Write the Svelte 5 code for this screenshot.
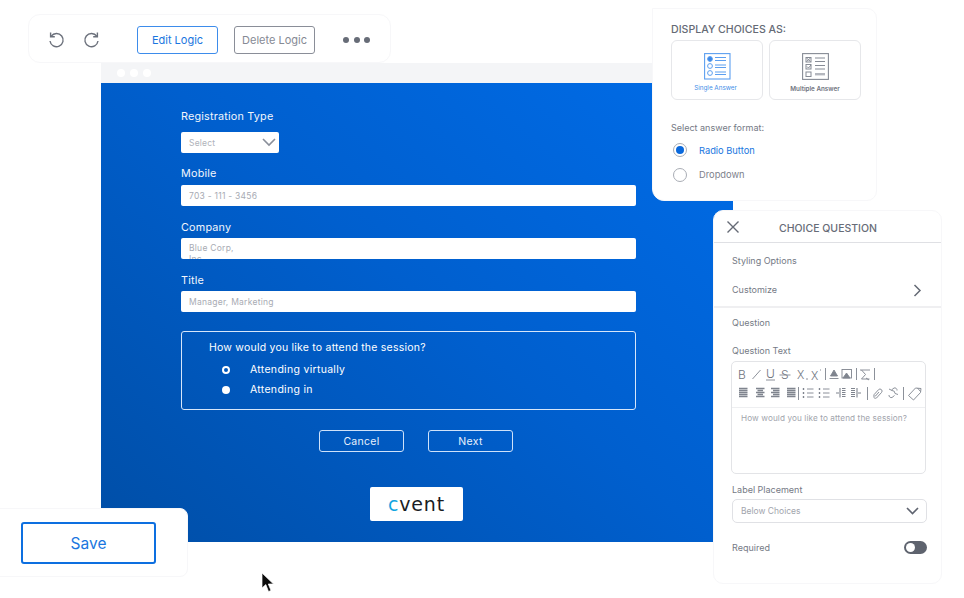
<script>
  const fields = [
    { label: 'Mobile', lines: ['703 - 111 - 3456'] },
    { label: 'Company', lines: ['Blue Corp,', 'Inc.'] },
    { label: 'Title', lines: ['Manager, Marketing'] }
  ];
</script>

<div class="canvas">
  <section class="window">
    <div class="chrome"><i></i><i></i><i></i></div>
    <div class="stage">
      <form class="form">
        <div class="lbl first">Registration Type</div>
        <div class="select">
          <span>Select</span>
          <svg width="14" height="9" viewBox="0 0 14 9"><path d="M1 1l6 6 6-6" fill="none" stroke="#8a8f9a" stroke-width="1.6"/></svg>
        </div>
        {#each fields as f}
          <div class="lbl">{f.label}</div>
          <div class="input" class:multi={f.lines.length > 1}>
            {#each f.lines as line}<span>{line}</span>{/each}
          </div>
        {/each}
        <div class="qbox">
          <div class="qtitle">How would you like to attend the session?</div>
          <div class="opt"><b class="dot on"></b>Attending virtually</div>
          <div class="opt"><b class="dot"></b>Attending in</div>
        </div>
        <div class="actions">
          <div class="ghost">Cancel</div>
          <div class="ghost">Next</div>
        </div>
      </form>
      <div class="logo"><span class="c">c</span>vent</div>
    </div>
  </section>

  <section class="panel toolbar">
    <svg class="hist" width="18" height="18" viewBox="0 0 18 18" fill="none" stroke="#6b707b" stroke-width="1.4"><path d="M4.2 5.2A6.6 6.6 0 1 1 3 10"/><path d="M3.6 1.6v4.2h4.2"/></svg>
    <svg class="hist two" width="18" height="18" viewBox="0 0 18 18" fill="none" stroke="#6b707b" stroke-width="1.4"><path d="M13.8 5.2A6.6 6.6 0 1 0 15 10"/><path d="M14.4 1.6v4.2h-4.2"/></svg>
    <div class="btn blue">Edit Logic</div>
    <div class="btn gray">Delete Logic</div>
    <div class="dots"><i></i><i></i><i></i></div>
  </section>

  <section class="panel display">
    <h2>DISPLAY CHOICES AS:</h2>
    <div class="cards">
      <div class="card">
        <svg width="27" height="27" viewBox="0 0 27 27" fill="none" stroke="#5c9ff0">
          <rect x=".6" y=".6" width="25.4" height="25.4" stroke-width="1.1"/>
          <circle cx="6" cy="6" r="2.4" fill="#3b87e6"/><circle cx="6" cy="13" r="2.4"/><circle cx="6" cy="20" r="2.4"/>
          <path d="M11 4.5h11M11 7.5h11M11 12h11M11 14.500h11M11 19h11M11 21.500h11" stroke-width="1.100"/>
        </svg>
        <span class="cap bluecap">Single Answer</span>
      </div>
      <div class="card">
        <svg class="ms" width="27" height="27" viewBox="0 0 27 27" fill="none" stroke="#868b95">
          <rect x=".6" y=".6" width="25.800" height="25.800" stroke-width="1.100"/>
          <rect x="4" y="4.500" width="5" height="4.500"/><rect x="4" y="11.500" width="5" height="4.500"/><rect x="4" y="19" width="5" height="4.500"/>
          <path d="M4.500 5l4 3.500M8.500 5l-4 3.500M5 13.500l1.500 1.500 2.500-3"/>
          <path d="M13 5h10M13 8.500h10M13 12.500h10M13 16h10" stroke-width="1.100"/><path d="M13 21.200h10" stroke-width="2.400" stroke="#b4b7be"/>
        </svg>
        <span class="cap graycap">Multiple Answer</span>
      </div>
    </div>
    <div class="fmt">Select answer format:</div>
    <div class="radio sel"><b><em></em></b><span>Radio Button</span></div>
    <div class="radio"><b></b><span>Dropdown</span></div>
  </section>

  <section class="panel choice">
    <header>
      <svg width="14" height="14" viewBox="0 0 14 14"><path d="M1.500 1.500l11 11M12.500 1.500l-11 11" stroke="#656a75" stroke-width="1.400"/></svg>
      <h3>CHOICE QUESTION</h3>
    </header>
    <div class="grp">
      <div class="t s1">Styling Options</div>
      <div class="t s2">
        <span>Customize</span>
        <svg width="9" height="13" viewBox="0 0 9 13"><path d="M1.500 1l5.500 5.500L1.500 12" fill="none" stroke="#656a75" stroke-width="1.500"/></svg>
      </div>
    </div>
    <div class="grp g2">
      <div class="t q1">Question</div>
      <div class="t q2">Question Text</div>
      <div class="editor">
        <svg class="tools" width="193" height="45" viewBox="732 362 193 45" fill="none" stroke="#7f848e" stroke-width=".9">
          <g font-family="Inter, sans-serif" font-size="12" font-weight="300" fill="#6f747e" stroke="none">
            <text x="738" y="379">B</text>
            <text x="766" y="378">U</text>
            <text x="781" y="379">S</text>
            <text x="797" y="379" font-size="11">X</text>
            <text x="811" y="380" font-size="11">X</text>
          </g>
          <path d="M752.500 379l8-9"/>
          <path d="M766 380h9M779.500 375h11M806 379h2M820 370h1"/>
          <path d="M825.500 368v12M856.500 368v12M874.500 368v12M798.500 387v13M867.500 387v13M903.500 387v13"/>
          <path d="M834 370l3.500 6h-7z" fill="#7f848e"/><path d="M829.500 378.500h9"/>
          <rect x="842" y="369.500" width="9.500" height="8.500"/><path d="M843 378l3.500-5 3.500 5z" fill="#7f848e"/>
          <path d="M860 370h10M861.500 370l4 4.500-4 4.500h8M866 378l3 2"/>
          <path d="M739 388.500h8.500M739 390.500h8.500M739 392.500h8.500M739 394.500h8.500M739 396.500h8.500M756 388.500h8.500M757.500 390.500h5.500M756 392.500h8.500M757.500 394.500h5.500M756 396.500h8.500M771 388.500h8.500M773 390.500h6.500M771 392.500h8.500M773 394.500h6.500M771 396.500h8.500M787 388.500h8.500M787 390.500h8.500M787 392.500h8.500M787 394.500h8.500M787 396.500h8.500" stroke-width="1.300"/>
          <path d="M807 389h6.500M807 393h6.500M807 397h6.500M823 389h6.500M823 393h6.500M823 397h6.500"/>
          <path d="M803.500 388v2M803.500 392v2M803.500 396v2M819.500 388v2M819.500 392v2M819.500 396v2" stroke-width="1.400"/>
          <path d="M840 388v9.500M842 388.500h3.500M842 390.500h3.500M842 392.500h3.500M842 394.500h3.500M842 396.500h3.500M836 393h3M857 388v9.500M851 388.500h4M851 390.500h4M851 392.500h4M851 394.500h4M851 396.500h4M858 393h3" stroke-width="1.100"/>
          <path d="M873.500 396.500a2 2 0 0 0 3 1.500l5-5.500a2 2 0 0 0-3-2.800l-4.500 5a1 1 0 0 0 1.500 1.300l3.500-4"/>
          <path d="M889 395a2.300 2.300 0 0 0 3 2.500l2.500-2M897 390.500a2.300 2.300 0 0 0-3-2.500l-2.500 2M889 389l3 1.500a3 3 0 0 1 3 3l3 1"/>
          <path d="M908.500 395.500l7-7.500 5.500.5-.5 4-7 7.500z"/><path d="M917.500 388l3 3.500"/>
        </svg>
        <div class="qtext">How would you like to attend the session?</div>
      </div>
      <div class="t lp">Label Placement</div>
      <div class="pick">
        <span>Below Choices</span>
        <svg width="13" height="8" viewBox="0 0 13 8"><path d="M1 1l5.500 5.500L12 1" fill="none" stroke="#5f6470" stroke-width="1.600"/></svg>
      </div>
      <div class="req">
        <span class="t">Required</span>
        <div class="toggle"><i></i></div>
      </div>
    </div>
  </section>

  <section class="panel save"><div class="savebtn">Save</div></section>

  <svg class="cursor" width="13" height="21" viewBox="0 0 13 21"><path d="M1 1v15l3.800-3.400L7.500 19.500l2.500-1-2.700-6.500H12.500z" fill="#0b0b0b" stroke="#fff" stroke-width=".7"/></svg>
</div>

<style>
  :global(body) { margin: 0; background: #fff; }
  .canvas { position: relative; width: 964px; height: 598px; overflow: hidden; background: #fff; font-family: Inter, "Liberation Sans", sans-serif; color: #6b707b; }
  .panel { position: absolute; box-sizing: border-box; background: #fff; border: 1px solid #f7f7f9; }

  .window { position: absolute; left: 101px; top: 63px; width: 632px; }
  .chrome { height: 20px; width: 551px; background: #f4f5f7; display: flex; align-items: center; gap: 5px; padding-left: 16px; box-sizing: border-box; }
  .chrome i { width: 8px; height: 8px; border-radius: 50%; background: #fff; }
  .stage { position: relative; height: 459px; background: linear-gradient(40deg, #004ea6 0%, #005fce 52%, #006ce8 100%); }
  .form { display: flex; flex-direction: column; align-items: flex-start; padding: 27px 0 0 80px; width: 455px; color: #fff; }
  .lbl { font-size: 10.800px; line-height: 14px; letter-spacing: .2px; color: #f2f6fc; }
  .lbl.first { margin: 0 0 8px; }
  .select { box-sizing: border-box; width: 98px; height: 21px; background: #fff; border-radius: 2px; display: flex; justify-content: space-between; align-items: center; padding: 0 3px 0 8px; color: #b0b3ba; font-size: 8.500px; letter-spacing: .2px; }
  .input { box-sizing: border-box; width: 455px; height: 21px; background: #fff; border-radius: 2px; display: flex; align-items: center; padding-left: 8px; color: #a8abb3; font-size: 8.500px; letter-spacing: .25px; overflow: hidden; }
  .input.multi { flex-direction: column; align-items: flex-start; padding-top: 5px; line-height: 11px; }
  .form .input + .lbl { margin-top: 15px; margin-bottom: 3px; }
  .form .select + .lbl { margin-top: 14px; margin-bottom: 4px; }
  .qbox { box-sizing: border-box; width: 455px; height: 79px; margin-top: 19px; border: 1px solid #d6e6fa; border-radius: 3px; padding: 9px 0 0 27px; }
  .qtitle { font-size: 10.500px; line-height: 14px; letter-spacing: .22px; margin-bottom: 8px; }
  .opt { display: flex; align-items: center; font-size: 10.500px; line-height: 14px; letter-spacing: .3px; margin: 0 0 5.500px 13px; }
  .dot { box-sizing: border-box; width: 8px; height: 8px; border-radius: 50%; background: #fff; margin-right: 20px; }
  .dot.on { border: 2.500px solid #fff; background: #0058bd; }
  .actions { display: flex; gap: 24px; margin: 20px 0 0 138px; }
  .ghost { box-sizing: border-box; width: 85px; height: 22px; border: 1px solid #cfe2fa; border-radius: 3px; display: flex; align-items: center; justify-content: center; font-size: 10.500px; letter-spacing: .3px; color: #e9f1fc; }
  .logo { position: absolute; left: 269px; top: 404px; width: 93px; height: 34px; background: #fff; border-radius: 2px; display: flex; align-items: center; justify-content: center; font-family: "DejaVu Sans", sans-serif; font-size: 19px; letter-spacing: .8px; color: #1a1d24; }
  .logo .c { color: #12a5e0; }

  .toolbar { left: 28px; top: 14px; width: 363px; height: 49px; border-radius: 12px; display: flex; align-items: center; padding: 3px 0 0 18px; }
  .hist.two { margin-left: 18px; }
  .btn { box-sizing: border-box; width: 81px; height: 28px; border-radius: 3px; display: flex; align-items: center; justify-content: center; font-size: 11px; }
  .blue { margin-left: 36px; border: 1px solid #3d8ceb; color: #1a76e0; }
  .gray { margin-left: 16px; border: 1px solid #8a8e98; color: #868a94; }
  .dots { display: flex; gap: 4.500px; margin-left: 28px; }
  .dots i { width: 6px; height: 6px; border-radius: 50%; background: #676c77; }

  .display { left: 652px; top: 8px; width: 225px; height: 193px; border-radius: 0 10px 10px 12px; padding: 14px 0 0 18px; }
  .display h2 { margin: 0 0 4px; font-size: 10.600px; line-height: 13px; font-weight: 500; color: #656a75; }
  .cards { display: flex; gap: 6px; }
  .card { box-sizing: border-box; width: 92px; height: 60px; border: 1px solid #e6e7ea; border-radius: 6px; display: flex; flex-direction: column; align-items: center; padding-top: 12px; }
  .cap { font-size: 6.300px; line-height: 8px; margin-top: 4px; }
  .bluecap { color: #3f8ee8; margin-right: 3px; }
  .graycap { color: #6f747e; font-weight: 600; margin-top: 5px; }
  .fmt { font-size: 9px; line-height: 12px; margin: 22px 0 8px; color: #747985; }
  .radio { display: flex; align-items: center; gap: 12px; margin: 0 0 10px 2px; height: 15px; font-size: 9.300px; color: #7d818b; }
  .radio b { box-sizing: border-box; width: 14px; height: 14px; border: 1px solid #a9adb5; border-radius: 50%; display: flex; align-items: center; justify-content: center; }
  .radio em { width: 8px; height: 8px; border-radius: 50%; background: #0a69dc; }
  .radio.sel span { color: #1a76e0; padding-top: 1px; }

  .choice { left: 713px; top: 210px; width: 229px; height: 374px; border-radius: 10px; }
  .choice header { position: relative; height: 31px; display: flex; align-items: center; justify-content: center; border-bottom: 1px solid #dfe0e4; }
  .choice header svg { position: absolute; left: 12px; top: 9px; }
  .choice h3 { margin: 4px 0 0 0; padding-left: 1px; font-size: 10.500px; font-weight: 500; color: #676c77; }
  .grp { padding: 0 18px; }
  .t { font-size: 9px; line-height: 12px; color: #757a85; }
  .s1 { padding-top: 12px; }
  .s2 { display: flex; justify-content: space-between; align-items: center; margin-top: 17px; padding-right: 1px; height: 12px; }
  .g2 { margin-top: 10px; border-top: 2px solid #efeff1; }
  .q1 { padding-top: 9px; }
  .q2 { margin-top: 16px; }
  .editor { box-sizing: border-box; width: 195px; height: 113px; margin: 4px 0 0 -1px; border: 1px solid #e3e4e7; border-radius: 5px; }
  .tools { display: block; border-bottom: 1px solid #eeeff1; }
  .qtext { font-size: 8.200px; line-height: 11px; letter-spacing: .1px; color: #a2a5ad; padding: 5px 0 0 9px; }
  .lp { margin-top: 10px; }
  .pick { box-sizing: border-box; width: 195px; height: 24px; margin-top: 3px; border: 1px solid #e0e1e5; border-radius: 5px; display: flex; align-items: center; justify-content: space-between; padding: 0 7px 0 8px; font-size: 8.500px; color: #a2a5ad; }
  .req { display: flex; justify-content: space-between; align-items: center; width: 195px; margin-top: 18px; }
  .toggle { width: 23px; height: 13px; border-radius: 7px; background: #5e636e; position: relative; }
  .toggle i { position: absolute; left: 2px; top: 2px; width: 9px; height: 9px; border-radius: 50%; background: #fff; }

  .save { left: -2px; top: 508px; width: 190px; height: 69px; border-radius: 0 8px 8px 0; padding: 13px 0 0 22px; }
  .savebtn { box-sizing: border-box; width: 135px; height: 42px; border: 2px solid #0d6fe0; border-radius: 3px; display: flex; align-items: center; justify-content: center; font-size: 15.500px; color: #1a76e0; }
  .cursor { position: absolute; left: 261px; top: 572px; }
</style>
